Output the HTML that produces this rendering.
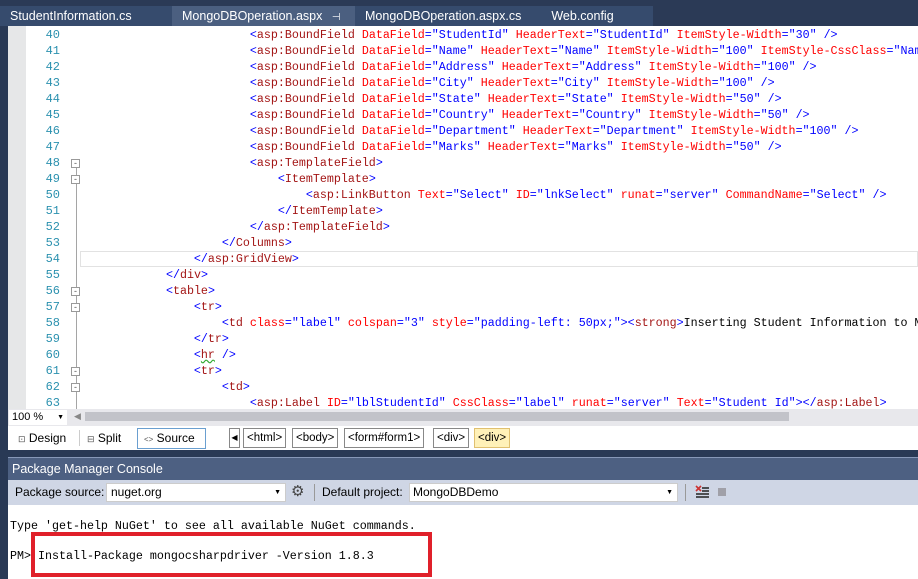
<!DOCTYPE html>
<html><head><meta charset="utf-8"><style>
*{margin:0;padding:0;box-sizing:border-box}
body{width:918px;height:579px;overflow:hidden;background:#293955;font-family:"Liberation Sans",sans-serif;position:relative}
.abs{position:absolute}
.tabs{left:0;top:0;width:918px;height:26px;background:#2b3a56}
.tab{position:absolute;top:6px;height:20px;color:#fff;font-size:12.5px;line-height:20px;padding-left:10px}
.ed{left:8px;top:26px;width:910px;height:383px;background:#fff;overflow:hidden}
.gut{left:8px;top:26px;width:18px;height:383px;background:#e6e7e8}
.ln{position:absolute;left:26px;width:34px;text-align:right;color:#2b91af;font:12px "Liberation Mono",monospace}
.code{position:absolute;left:82px;white-space:pre;font:11.67px "Liberation Mono",monospace;color:#000}
.b{color:#0000ff}.m{color:#a31515}.r{color:#ff0000}
.fold{position:absolute;left:71px;width:9px;height:9px;border:1px solid #999;background:#fff;font-size:9px;line-height:6px;text-align:center;color:#555}
</style></head><body>
<div class="abs tabs"></div>
<div class="tab" style="left:0;width:172px;background:#364b6d">StudentInformation.cs</div>
<div class="tab" style="left:172px;width:183px;background:#4b5f80">MongoDBOperation.aspx <span style="margin-left:6px;font-size:10px">⊣</span> <span style="margin-left:4px">✕</span></div>
<div class="tab" style="left:355px;width:298px;background:#364b6d">MongoDBOperation.aspx.cs<span style="margin-left:30px">Web.config</span></div>
<div class="abs ed"></div>
<div class="abs gut"></div>
<div class="abs" style="left:76px;top:160px;width:1px;height:249px;background:#a5a5a5"></div>
<div class="abs" style="left:80px;top:251px;width:838px;height:16px;border:1px solid #e2e2e2"></div>
<div class="ln" style="top:28px">40</div><div class="ln" style="top:44px">41</div><div class="ln" style="top:60px">42</div><div class="ln" style="top:76px">43</div><div class="ln" style="top:92px">44</div><div class="ln" style="top:108px">45</div><div class="ln" style="top:124px">46</div><div class="ln" style="top:140px">47</div><div class="ln" style="top:156px">48</div><div class="ln" style="top:172px">49</div><div class="ln" style="top:188px">50</div><div class="ln" style="top:204px">51</div><div class="ln" style="top:220px">52</div><div class="ln" style="top:236px">53</div><div class="ln" style="top:252px">54</div><div class="ln" style="top:268px">55</div><div class="ln" style="top:284px">56</div><div class="ln" style="top:300px">57</div><div class="ln" style="top:316px">58</div><div class="ln" style="top:332px">59</div><div class="ln" style="top:348px">60</div><div class="ln" style="top:364px">61</div><div class="ln" style="top:380px">62</div><div class="ln" style="top:396px">63</div>
<div class="fold" style="top:159px">-</div><div class="fold" style="top:175px">-</div><div class="fold" style="top:287px">-</div><div class="fold" style="top:303px">-</div><div class="fold" style="top:367px">-</div><div class="fold" style="top:383px">-</div>
<div class="code" style="top:28px">                        <span class="b">&lt;</span><span class="m">asp:BoundField</span> <span class="r">DataField</span><span class="b">="StudentId"</span> <span class="r">HeaderText</span><span class="b">="StudentId"</span> <span class="r">ItemStyle-Width</span><span class="b">="30" /&gt;</span></div>
<div class="code" style="top:44px">                        <span class="b">&lt;</span><span class="m">asp:BoundField</span> <span class="r">DataField</span><span class="b">="Name"</span> <span class="r">HeaderText</span><span class="b">="Name"</span> <span class="r">ItemStyle-Width</span><span class="b">="100"</span> <span class="r">ItemStyle-CssClass</span><span class="b">="Name"</span></div>
<div class="code" style="top:60px">                        <span class="b">&lt;</span><span class="m">asp:BoundField</span> <span class="r">DataField</span><span class="b">="Address"</span> <span class="r">HeaderText</span><span class="b">="Address"</span> <span class="r">ItemStyle-Width</span><span class="b">="100" /&gt;</span></div>
<div class="code" style="top:76px">                        <span class="b">&lt;</span><span class="m">asp:BoundField</span> <span class="r">DataField</span><span class="b">="City"</span> <span class="r">HeaderText</span><span class="b">="City"</span> <span class="r">ItemStyle-Width</span><span class="b">="100" /&gt;</span></div>
<div class="code" style="top:92px">                        <span class="b">&lt;</span><span class="m">asp:BoundField</span> <span class="r">DataField</span><span class="b">="State"</span> <span class="r">HeaderText</span><span class="b">="State"</span> <span class="r">ItemStyle-Width</span><span class="b">="50" /&gt;</span></div>
<div class="code" style="top:108px">                        <span class="b">&lt;</span><span class="m">asp:BoundField</span> <span class="r">DataField</span><span class="b">="Country"</span> <span class="r">HeaderText</span><span class="b">="Country"</span> <span class="r">ItemStyle-Width</span><span class="b">="50" /&gt;</span></div>
<div class="code" style="top:124px">                        <span class="b">&lt;</span><span class="m">asp:BoundField</span> <span class="r">DataField</span><span class="b">="Department"</span> <span class="r">HeaderText</span><span class="b">="Department"</span> <span class="r">ItemStyle-Width</span><span class="b">="100" /&gt;</span></div>
<div class="code" style="top:140px">                        <span class="b">&lt;</span><span class="m">asp:BoundField</span> <span class="r">DataField</span><span class="b">="Marks"</span> <span class="r">HeaderText</span><span class="b">="Marks"</span> <span class="r">ItemStyle-Width</span><span class="b">="50" /&gt;</span></div>
<div class="code" style="top:156px">                        <span class="b">&lt;</span><span class="m">asp:TemplateField</span><span class="b">&gt;</span></div>
<div class="code" style="top:172px">                            <span class="b">&lt;</span><span class="m">ItemTemplate</span><span class="b">&gt;</span></div>
<div class="code" style="top:188px">                                <span class="b">&lt;</span><span class="m">asp:LinkButton</span> <span class="r">Text</span><span class="b">="Select"</span> <span class="r">ID</span><span class="b">="lnkSelect"</span> <span class="r">runat</span><span class="b">="server"</span> <span class="r">CommandName</span><span class="b">="Select" /&gt;</span></div>
<div class="code" style="top:204px">                            <span class="b">&lt;/</span><span class="m">ItemTemplate</span><span class="b">&gt;</span></div>
<div class="code" style="top:220px">                        <span class="b">&lt;/</span><span class="m">asp:TemplateField</span><span class="b">&gt;</span></div>
<div class="code" style="top:236px">                    <span class="b">&lt;/</span><span class="m">Columns</span><span class="b">&gt;</span></div>
<div class="code" style="top:252px">                <span class="b">&lt;/</span><span class="m">asp:GridView</span><span class="b">&gt;</span></div>
<div class="code" style="top:268px">            <span class="b">&lt;/</span><span class="m">div</span><span class="b">&gt;</span></div>
<div class="code" style="top:284px">            <span class="b">&lt;</span><span class="m">table</span><span class="b">&gt;</span></div>
<div class="code" style="top:300px">                <span class="b">&lt;</span><span class="m">tr</span><span class="b">&gt;</span></div>
<div class="code" style="top:316px">                    <span class="b">&lt;</span><span class="m">td</span> <span class="r">class</span><span class="b">="label"</span> <span class="r">colspan</span><span class="b">="3"</span> <span class="r">style</span><span class="b">="padding-left: 50px;"&gt;&lt;</span><span class="m">strong</span><span class="b">&gt;</span>Inserting Student Information to MongoDB</div>
<div class="code" style="top:332px">                <span class="b">&lt;/</span><span class="m">tr</span><span class="b">&gt;</span></div>
<div class="code" style="top:348px">                <span class="b">&lt;</span><span class="m" style="text-decoration:underline wavy #3a3">hr</span> <span class="b">/&gt;</span></div>
<div class="code" style="top:364px">                <span class="b">&lt;</span><span class="m">tr</span><span class="b">&gt;</span></div>
<div class="code" style="top:380px">                    <span class="b">&lt;</span><span class="m">td</span><span class="b">&gt;</span></div>
<div class="code" style="top:396px">                        <span class="b">&lt;</span><span class="m">asp:Label</span> <span class="r">ID</span><span class="b">="lblStudentId"</span> <span class="r">CssClass</span><span class="b">="label"</span> <span class="r">runat</span><span class="b">="server"</span> <span class="r">Text</span><span class="b">="Student Id"&gt;&lt;/</span><span class="m">asp:Label</span><span class="b">&gt;</span></div>
<div class="abs" style="left:8px;top:409px;width:910px;height:17px;background:#e8e8ec"></div>
<div class="abs" style="left:9px;top:410px;width:58px;height:15px;background:#fff;font-size:11px;line-height:15px;padding-left:3px">100 %<span style="position:absolute;right:3px;font-size:7px">▼</span></div>
<div class="abs" style="left:74px;top:411px;font-size:9px;color:#888">◀</div>
<div class="abs" style="left:85px;top:412px;width:704px;height:9px;background:#c2c3c9"></div>
<div class="abs" style="left:8px;top:426px;width:910px;height:24px;background:#fff;font-size:12px"></div>
<div class="abs" style="left:18px;top:430px;font-size:12px;line-height:16px"><span style="font-size:9px;color:#555">⊡</span> Design</div>
<div class="abs" style="left:79px;top:430px;width:1px;height:16px;background:#ccc"></div>
<div class="abs" style="left:87px;top:430px;font-size:12px;line-height:16px"><span style="font-size:9px;color:#555">⊟</span> Split</div>
<div class="abs" style="left:137px;top:428px;width:69px;height:21px;border:1px solid #6a9fd0;font-size:12px;line-height:19px;padding-left:6px"><span style="font-size:8px;color:#555">&lt;&gt;</span> Source</div>
<div class="abs" style="left:229px;top:428px;width:11px;height:20px;border:1px solid #888;font-size:8px;line-height:18px;text-align:center">◀</div>
<div class="abs" style="left:243px;top:428px;height:20px;border:1px solid #888;font-size:11.5px;line-height:18px;padding:0 3px">&lt;html&gt;</div>
<div class="abs" style="left:292px;top:428px;height:20px;border:1px solid #888;font-size:11.5px;line-height:18px;padding:0 3px">&lt;body&gt;</div>
<div class="abs" style="left:344px;top:428px;height:20px;border:1px solid #888;font-size:11.5px;line-height:18px;padding:0 3px">&lt;form#form1&gt;</div>
<div class="abs" style="left:433px;top:428px;height:20px;border:1px solid #888;font-size:11.5px;line-height:18px;padding:0 3px">&lt;div&gt;</div>
<div class="abs" style="left:474px;top:428px;height:20px;border:1px solid #e0c070;background:#fff1b8;font-size:11.5px;line-height:18px;padding:0 3px">&lt;div&gt;</div>
<div class="abs" style="left:8px;top:457px;width:910px;height:1px;background:#8798b8"></div>
<div class="abs" style="left:8px;top:458px;width:910px;height:22px;background:#4d6082;color:#fff;font-size:12.5px;line-height:22px;padding-left:4px">Package Manager Console</div>
<div class="abs" style="left:8px;top:480px;width:910px;height:25px;background:#cfd6e5;font-size:12px"></div>
<div class="abs" style="left:15px;top:485px;font-size:12px;line-height:15px">Package source:</div>
<div class="abs" style="left:106px;top:483px;width:180px;height:19px;background:#fff;border:1px solid #ccc;font-size:12px;line-height:17px;padding-left:4px">nuget.org<span style="position:absolute;right:4px;font-size:7px">▼</span></div>
<div class="abs" style="left:291px;top:482px;font-size:15px;color:#444">⚙</div>
<div class="abs" style="left:314px;top:484px;width:1px;height:17px;background:#999"></div>
<div class="abs" style="left:322px;top:485px;font-size:12px;line-height:15px">Default project:</div>
<div class="abs" style="left:409px;top:483px;width:269px;height:19px;background:#fff;border:1px solid #ccc;font-size:12px;line-height:17px;padding-left:3px">MongoDBDemo<span style="position:absolute;right:4px;font-size:7px">▼</span></div>
<div class="abs" style="left:685px;top:484px;width:1px;height:17px;background:#999"></div>
<svg class="abs" style="left:694px;top:484px" width="16" height="16"><path d="M2 2l5 5M7 2l-5 5" stroke="#c33" stroke-width="1.6"/><path d="M8 4h7M8 7h7M2 10h13M2 13h13" stroke="#222" stroke-width="1.6"/></svg>
<div class="abs" style="left:718px;top:488px;width:8px;height:8px;background:#a0a0a8"></div>
<div class="abs" style="left:8px;top:505px;width:910px;height:74px;background:#fff"></div>
<div class="abs" style="left:10px;top:519px;white-space:pre;font:11.67px 'Liberation Mono',monospace">Type 'get-help NuGet' to see all available NuGet commands.</div>
<div class="abs" style="left:10px;top:549px;white-space:pre;font:11.67px 'Liberation Mono',monospace">PM&gt; Install-Package mongocsharpdriver -Version 1.8.3</div>
<div class="abs" style="left:31px;top:532px;width:401px;height:45px;border:4px solid #e0202a"></div>
</body></html>
